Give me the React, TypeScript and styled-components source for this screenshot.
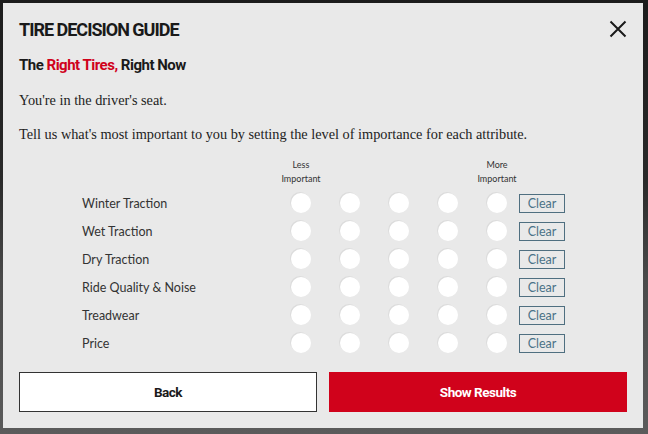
import React from "react";
import styled, { createGlobalStyle } from "styled-components";

const GlobalStyle = createGlobalStyle`
  html, body {
    margin: 0;
    padding: 0;
    background: #5b5b5b;
  }
  body {
    width: 648px;
    height: 434px;
    overflow: hidden;
  }
`;

const Backdrop = styled.div`
  width: 648px;
  height: 434px;
  box-sizing: border-box;
  padding: 3px 5px 6px 3px;
  background: linear-gradient(to bottom, #1c1c1c 0px, #2a2a2a 180px, #4a4a4a 280px, #5b5b5b 434px);
`;

const Modal = styled.div`
  background: #e9e9e9;
  height: 100%;
  box-sizing: border-box;
  padding: 16px 16px 0 16px;
  display: flex;
  flex-direction: column;
`;

const Header = styled.div`
  display: flex;
  align-items: center;
  justify-content: space-between;
  height: 20px;
`;

const Title = styled.h1`
  margin: 0;
  font-family: "Roboto", sans-serif;
  font-weight: 700;
  font-size: 18px;
  letter-spacing: -1px;
  color: #1a1a1a;
`;

const CloseButton = styled.button`
  border: 0;
  background: transparent;
  padding: 0;
  width: 20px;
  height: 20px;
  margin-right: -1px;
  cursor: pointer;
  display: flex;
  align-items: center;
  justify-content: center;
`;

const Subtitle = styled.h2`
  margin: 17px 0 0 0;
  font-family: "Roboto", sans-serif;
  font-weight: 700;
  font-size: 15px;
  letter-spacing: -0.5px;
  color: #1a1a1a;
  line-height: 18px;
`;

const Red = styled.span`
  color: #d0021b;
`;

const Copy = styled.p<{ $top: number }>`
  margin: ${(p) => p.$top}px 0 0 0;
  font-family: "Liberation Serif", serif;
  font-size: 14.3px;
  line-height: 16px;
  color: #222;
`;

const Matrix = styled.div`
  margin: 16px 0 0 63px;
  display: flex;
  flex-direction: column;
`;

const ScaleRow = styled.div`
  display: flex;
  align-items: center;
  height: 28px;
`;

const Label = styled.div`
  width: 209px;
  font-family: "Lato", sans-serif;
  font-size: 12.5px;
  color: #333;
`;

const Cells = styled.div`
  display: flex;
  gap: 29px;
`;

const HeadCell = styled.div`
  width: 20px;
  display: flex;
  justify-content: center;
  text-align: center;
  font-family: "Lato", sans-serif;
  font-size: 9px;
  line-height: 14px;
  color: #333;
  white-space: nowrap;
`;

const Radio = styled.span`
  width: 20px;
  height: 20px;
  border-radius: 50%;
  background: #fff;
  box-shadow: -1px -1px 0 0 #dcdcdc;
  display: block;
`;

const ClearButton = styled.button`
  margin-left: 12px;
  width: 46px;
  height: 19px;
  box-sizing: border-box;
  border: 1px solid #4f6f80;
  background: transparent;
  padding: 0;
  font-family: "Lato", sans-serif;
  font-size: 12.5px;
  color: #4a7287;
  cursor: pointer;
`;

const HeadRow = styled.div`
  display: flex;
  height: 31px;
  align-items: flex-start;
`;

const Actions = styled.div`
  margin-top: 15px;
  display: grid;
  grid-template-columns: 1fr 1fr;
  gap: 12px;
`;

const ActionButton = styled.button<{ $primary?: boolean }>`
  height: 40px;
  box-sizing: border-box;
  border: 1px solid ${(p) => (p.$primary ? "#d0021b" : "#333")};
  background: ${(p) => (p.$primary ? "#d0021b" : "#fff")};
  color: ${(p) => (p.$primary ? "#fff" : "#1a1a1a")};
  font-family: "Roboto", sans-serif;
  font-weight: 700;
  font-size: 13.5px;
  letter-spacing: -0.5px;
  cursor: pointer;
`;

const attributes = [
  "Winter Traction",
  "Wet Traction",
  "Dry Traction",
  "Ride Quality & Noise",
  "Treadwear",
  "Price",
];

export default function App() {
  return (
    <>
      <GlobalStyle />
      <Backdrop>
        <Modal>
          <Header>
            <Title>TIRE DECISION GUIDE</Title>
            <CloseButton aria-label="Close">
              <svg width="18" height="18" viewBox="0 0 18 18">
                <path d="M1.5 1.5 L16.5 16.5 M16.5 1.5 L1.5 16.5" stroke="#1a1a1a" strokeWidth="2" fill="none" />
              </svg>
            </CloseButton>
          </Header>
          <Subtitle>
            The <Red>Right Tires,</Red> Right Now
          </Subtitle>
          <Copy $top={18}>You're in the driver's seat.</Copy>
          <Copy $top={18}>
            Tell us what's most important to you by setting the level of importance for each attribute.
          </Copy>
          <Matrix>
            <HeadRow>
              <Label />
              <Cells>
                <HeadCell>
                  Less
                  <br />
                  Important
                </HeadCell>
                <HeadCell />
                <HeadCell />
                <HeadCell />
                <HeadCell>
                  More
                  <br />
                  Important
                </HeadCell>
              </Cells>
            </HeadRow>
            {attributes.map((a) => (
              <ScaleRow key={a}>
                <Label>{a}</Label>
                <Cells>
                  {[1, 2, 3, 4, 5].map((n) => (
                    <Radio key={n} />
                  ))}
                </Cells>
                <ClearButton>Clear</ClearButton>
              </ScaleRow>
            ))}
          </Matrix>
          <Actions>
            <ActionButton>Back</ActionButton>
            <ActionButton $primary>Show Results</ActionButton>
          </Actions>
        </Modal>
      </Backdrop>
    </>
  );
}
